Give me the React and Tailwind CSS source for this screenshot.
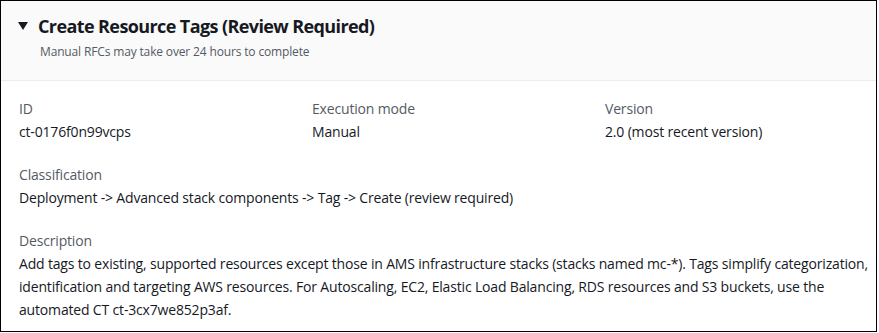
import React from 'react';

function Field({ label, children }) {
  return (
    <div className="flex flex-col">
      <div className="text-[14px] leading-[23px] tracking-[-0.17px] text-[#545b64]">{label}</div>
      <div className="text-[14px] leading-[23px] tracking-[-0.17px] text-[#16191f]">{children}</div>
    </div>
  );
}

function App() {
  return (
    <div className="w-[879px] h-[333px] bg-white" style={{ fontFamily: '"Open Sans", Arial, sans-serif' }}>
      <div className="w-[877px] h-[332px] border border-black flex flex-col">
        {/* Header */}
        <div className="h-[80px] bg-[#fafafa] border-b border-[#eaeded] px-[17px] pt-[13px]">
          <div className="flex items-center gap-[10px]">
            <svg width="10" height="8" viewBox="0 0 10 8" className="shrink-0">
              <polygon points="0,0 10,0 5,8" fill="#16191f" />
            </svg>
            <h2 className="text-[18px] leading-[24px] font-bold tracking-[-0.6px] text-[#16191f]">Create Resource Tags (Review Required)</h2>
          </div>
          <p className="ml-[22px] mt-[6px] text-[12px] leading-[16px] tracking-[-0.15px] text-[#545b64]">Manual RFCs may take over 24 hours to complete</p>
        </div>

        {/* Body */}
        <div className="pl-[18px] pr-0 pt-[16px] flex flex-col gap-[20px]">
          <div className="grid grid-cols-[250px_250px_1fr] gap-x-[43px]">
            <Field label="ID">ct-0176f0n99vcps</Field>
            <Field label="Execution mode">Manual</Field>
            <Field label="Version">2.0 (most recent version)</Field>
          </div>
          <Field label="Classification">Deployment -&gt; Advanced stack components -&gt; Tag -&gt; Create (review required)</Field>
          <Field label="Description">
            <span className="whitespace-nowrap">Add tags to existing, supported resources except those in AMS infrastructure stacks (stacks named mc-*). Tags simplify categorization,</span>
            <br />
            identification and targeting AWS resources. For Autoscaling, EC2, Elastic Load Balancing, RDS resources and S3 buckets, use the
            <br />
            automated CT ct-3cx7we852p3af.
          </Field>
        </div>
      </div>
    </div>
  );
}

export default App;
